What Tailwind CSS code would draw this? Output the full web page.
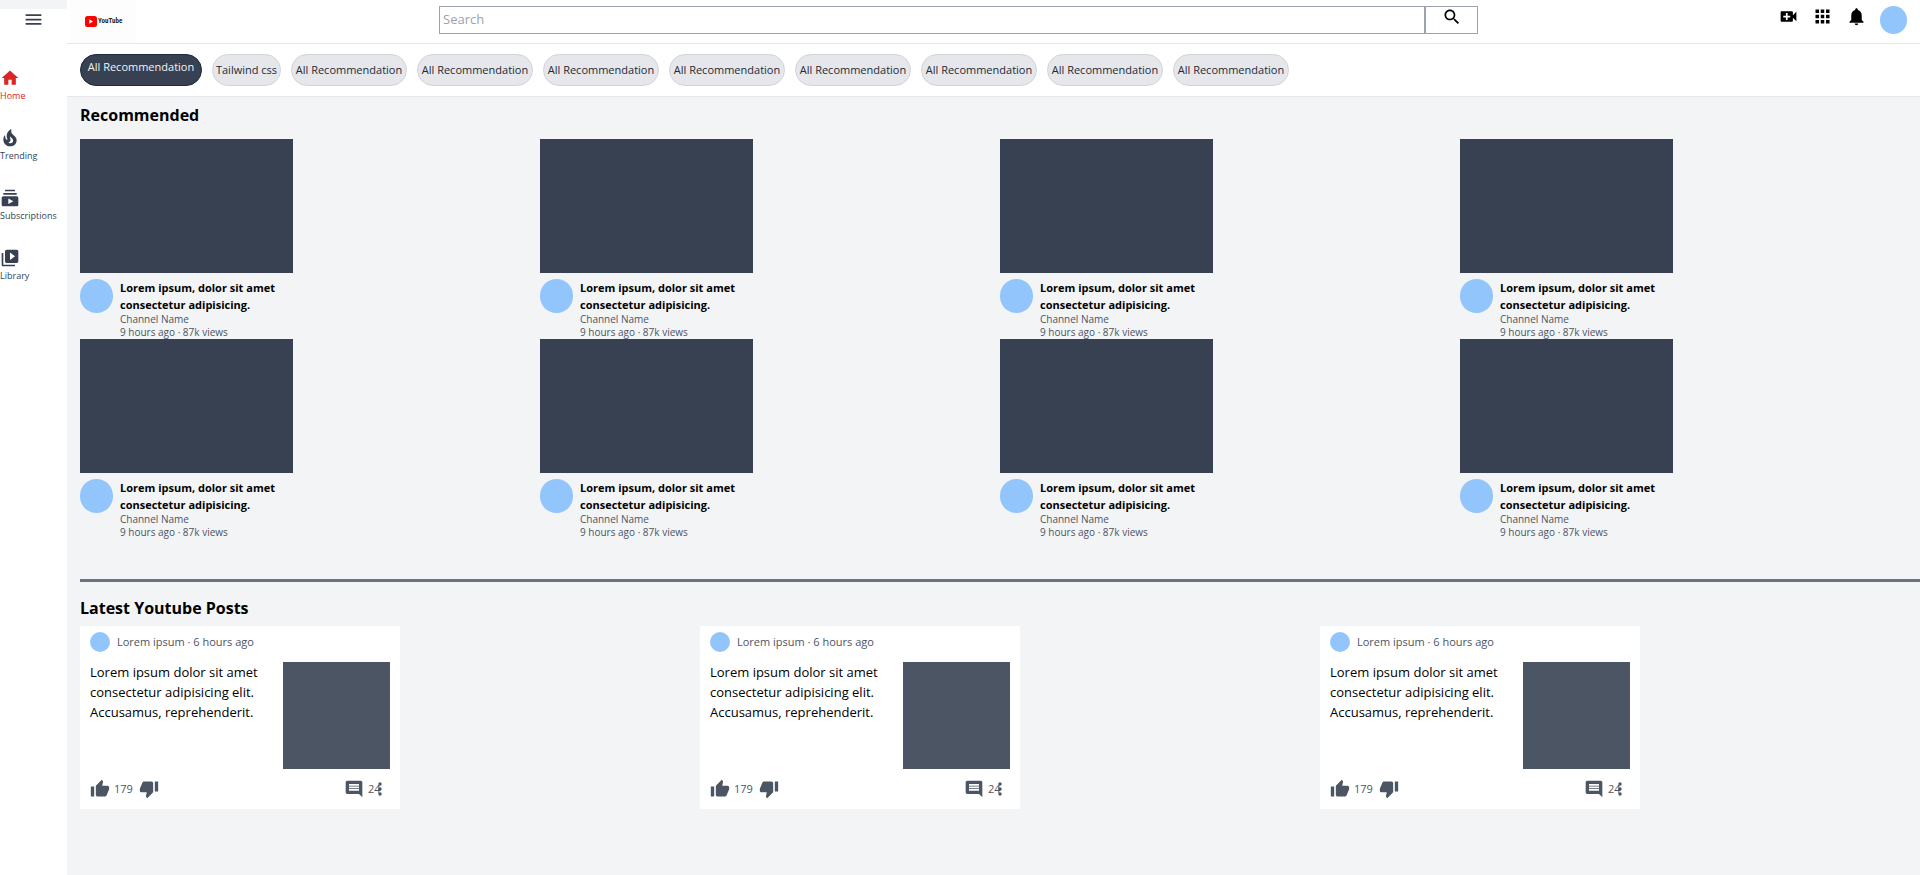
<!DOCTYPE html>
<html lang="en">
<head>
<meta charset="utf-8">
<meta name="viewport" content="width=device-width, initial-scale=1">
<title>YouTube</title>
<script src="https://cdn.jsdelivr.net/npm/@tailwindcss/browser@4"></script>
</head>
<body class="flex min-h-screen bg-[#f3f4f6] font-['Open_Sans','Noto_Sans',sans-serif] text-black">

<svg class="hidden" aria-hidden="true">
  <symbol id="menu" viewBox="0 0 24 24"><path d="M3 18h18v-2H3v2zm0-5h18v-2H3v2zm0-7v2h18V6H3z"/></symbol>
  <symbol id="home" viewBox="0 0 24 24"><path d="M10 20v-6h4v6h5v-8h3L12 3 2 12h3v8z"/></symbol>
  <symbol id="fire" viewBox="0 0 24 24"><path d="M19.48 12.35c-1.57-4.08-7.16-4.3-5.81-10.23.1-.44-.37-.78-.75-.55C9.29 3.71 6.68 8 8.87 13.62c.18.46-.36.89-.75.59-1.81-1.37-2-3.34-1.84-4.75.06-.52-.62-.77-.91-.34C4.69 10.16 4 11.84 4 14.37c.38 5.6 5.11 7.32 6.81 7.54 2.43.31 5.06-.14 6.95-1.87 2.08-1.93 2.84-5.01 1.72-7.69zm-9.28 5.03c1.44-.35 2.18-1.39 2.38-2.31.33-1.43-.96-2.83-.09-5.09.33 1.87 3.27 3.04 3.27 5.08.08 2.53-2.66 4.7-5.56 2.32z"/></symbol>
  <symbol id="subs" viewBox="0 0 24 24"><path d="M20 8H4V6h16v2zm-2-6H6v2h12V2zm4 10v8c0 1.1-.9 2-2 2H4c-1.1 0-2-.9-2-2v-8c0-1.1.9-2 2-2h16c1.1 0 2 .9 2 2zm-6 4l-6-3.27v6.53L16 16z"/></symbol>
  <symbol id="library" viewBox="0 0 24 24"><path d="M4 6H2v14c0 1.1.9 2 2 2h14v-2H4V6zm16-4H8c-1.1 0-2 .9-2 2v12c0 1.1.9 2 2 2h12c1.1 0 2-.9 2-2V4c0-1.1-.9-2-2-2zm-8 12.5v-9l6 4.5-6 4.5z"/></symbol>
  <symbol id="search" viewBox="0 0 24 24"><path d="M15.5 14h-.79l-.28-.27C15.41 12.59 16 11.11 16 9.5 16 5.91 13.09 3 9.5 3S3 5.91 3 9.5 5.91 16 9.5 16c1.61 0 3.09-.59 4.23-1.57l.27.28v.79l5 4.99L20.49 19l-4.99-5zm-6 0C7.01 14 5 11.99 5 9.5S7.01 5 9.5 5 14 7.01 14 9.5 11.99 14 9.5 14z"/></symbol>
  <symbol id="create" viewBox="0 0 24 24"><path d="M17 10.5V7c0-.55-.45-1-1-1H4c-.55 0-1 .45-1 1v10c0 .55.45 1 1 1h12c.55 0 1-.45 1-1v-3.5l4 4v-11l-4 4zM14 13h-3v3H9v-3H6v-2h3V8h2v3h3v2z"/></symbol>
  <symbol id="apps" viewBox="0 0 24 24"><path d="M4 8h4V4H4v4zm6 12h4v-4h-4v4zm-6 0h4v-4H4v4zm0-6h4v-4H4v4zm6 0h4v-4h-4v4zm6-10v4h4V4h-4zm-6 4h4V4h-4v4zm6 6h4v-4h-4v4zm0 6h4v-4h-4v4z"/></symbol>
  <symbol id="bell" viewBox="0 0 24 24"><path d="M12 22c1.1 0 2-.9 2-2h-4c0 1.1.89 2 2 2zm6-6v-5c0-3.07-1.64-5.64-4.5-6.32V4c0-.83-.67-1.5-1.5-1.5s-1.5.67-1.5 1.5v.68C7.63 5.36 6 7.92 6 11v5l-2 2v1h16v-1l-2-2z"/></symbol>
  <symbol id="up" viewBox="0 0 24 24"><path d="M1 21h4V9H1v12zm22-11c0-1.1-.9-2-2-2h-6.31l.95-4.57.03-.32c0-.41-.17-.79-.44-1.06L14.17 1 7.59 7.59C7.22 7.95 7 8.45 7 9v10c0 1.1.9 2 2 2h9c.83 0 1.54-.5 1.84-1.22l3.02-7.05c.09-.23.14-.47.14-.73v-2z"/></symbol>
  <symbol id="down" viewBox="0 0 24 24"><path d="M15 3H6c-.83 0-1.54.5-1.84 1.22l-3.02 7.05c-.09.23-.14.47-.14.73v2c0 1.1.9 2 2 2h6.31l-.95 4.57-.03.32c0 .41.17.79.44 1.06L9.83 23l6.59-6.59c.36-.36.58-.86.58-1.41V5c0-1.1-.9-2-2-2zm4 0v12h4V3h-4z"/></symbol>
  <symbol id="comment" viewBox="0 0 24 24"><path d="M21.99 4c0-1.1-.89-2-1.99-2H4c-1.1 0-2 .9-2 2v12c0 1.1.9 2 2 2h14l4 4-.01-18zM18 14H6v-2h12v2zm0-3H6V9h12v2zm0-3H6V6h12v2z"/></symbol>
  <symbol id="more" viewBox="0 0 24 24"><path d="M12 8c1.1 0 2-.9 2-2s-.9-2-2-2-2 .9-2 2 .9 2 2 2zm0 2c-1.1 0-2 .9-2 2s.9 2 2 2 2-.9 2-2-.9-2-2-2zm0 6c-1.1 0-2 .9-2 2s.9 2 2 2 2-.9 2-2-.9-2-2-2z"/></symbol>
</svg>

<aside class="mt-[9px] flex w-[67px] shrink-0 flex-col bg-white text-[#374151]">
  <button type="button" aria-label="Menu" class="flex h-5 justify-center"><svg class="size-[21px] fill-current"><use href="#menu"/></svg></button>
  <nav class="mt-[39px] flex flex-col gap-6 text-[9px] leading-[15px]">
    <a href="#" class="flex h-9 flex-col text-[#dc2626]"><svg class="size-5 fill-current"><use href="#home"/></svg>Home</a>
    <a href="#" class="flex h-9 flex-col"><svg class="size-5 fill-current"><use href="#fire"/></svg>Trending</a>
    <a href="#" class="flex h-9 flex-col"><svg class="size-5 fill-current"><use href="#subs"/></svg>Subscriptions</a>
    <a href="#" class="flex h-9 flex-col"><svg class="size-5 fill-current"><use href="#library"/></svg>Library</a>
  </nav>
</aside>

<div class="min-w-0 flex-1">
  <header class="flex h-11 items-start border-b border-[#e5e7eb] bg-white">
    <a href="#" aria-label="YouTube home" class="ml-[3px] flex h-[43px] w-[66px] items-center gap-px bg-[#fdfdfd] pl-[15px]">
      <svg class="h-[11px] w-3 shrink-0" viewBox="0 0 12 11"><rect width="12" height="11" rx="2.5" fill="#f00"/><path d="M4.3 3.2v4.6L8 5.5z" fill="#fff"/></svg>
      <span class="font-['Roboto_Condensed','Roboto',sans-serif] text-[7px] font-bold text-[#282828]">YouTube</span>
    </a>
    <form class="mt-1.5 ml-[303px] flex h-7 flex-1" onsubmit="return false">
      <input type="search" aria-label="Search" placeholder="Search" class="min-w-0 flex-1 border border-[#9ca3af] pl-[3px] text-[13px] outline-none placeholder:text-[#9ca3af]">
      <button type="submit" aria-label="Search" class="flex w-[53px] justify-center border border-[#9ca3af]"><svg class="size-5"><use href="#search"/></svg></button>
    </form>
    <div class="mt-1.5 ml-[300px] mr-[13px] flex gap-[13px]">
      <button type="button" aria-label="Create" class="h-5"><svg class="size-[21px]"><use href="#create"/></svg></button>
      <button type="button" aria-label="Apps" class="h-5"><svg class="size-[21px]"><use href="#apps"/></svg></button>
      <button type="button" aria-label="Notifications" class="h-5"><svg class="size-[21px]"><use href="#bell"/></svg></button>
      <button type="button" aria-label="Account" class="h-7 w-[27px] rounded-full bg-[#93c5fd]"></button>
    </div>
  </header>

  <div id="chips" class="flex h-[53px] items-center gap-2.5 border-b border-[#e5e7eb] bg-white pl-[13px] text-[11px] text-[#1f2937]">
    <button type="button" class="h-8 w-[122px] rounded-full border border-[#1f2937] bg-[#374151] pb-1.5 whitespace-nowrap text-[#f3f4f6]">All Recommendation</button>
    <button type="button" class="h-8 w-[69px] rounded-full border border-[#d1d5db] bg-[#e5e7eb] whitespace-nowrap">Tailwind css</button>
  </div>

  <main class="pl-[13px]">
    <h2 class="pt-1.5 text-base leading-6 font-bold">Recommended</h2>
    <section id="videos" aria-label="Recommended" class="mt-3 grid grid-cols-4"></section>
    <hr class="mt-10 border-t-3 border-[#6b7280]">
    <h2 class="mt-3.5 text-base leading-6 font-bold">Latest Youtube Posts</h2>
    <section id="posts" aria-label="Latest Youtube Posts" class="mt-1.5 grid grid-cols-3 gap-5"></section>
  </main>
</div>

<template id="chip">
  <button type="button" class="h-8 w-[116px] rounded-full border border-[#d1d5db] bg-[#e5e7eb] whitespace-nowrap">All Recommendation</button>
</template>

<template id="video">
  <article class="h-[200px] w-[213px]">
    <div class="h-[134px] bg-[#374151]"></div>
    <div class="mt-1.5 flex gap-[7px]">
      <div class="h-[34px] w-[33px] shrink-0 rounded-full bg-[#93c5fd]"></div>
      <div class="text-[10px] leading-[13px] text-[#4b5563]">
        <h3 class="text-[11px] leading-[17px] font-bold whitespace-nowrap text-black">Lorem ipsum, dolor sit amet<br>consectetur adipisicing.</h3>
        <p>Channel Name</p>
        <p>9 hours ago · 87k views</p>
      </div>
    </div>
  </article>
</template>

<template id="post">
  <article class="h-[183px] w-80 bg-white px-2.5 pt-1.5 text-[#4b5563]">
    <div class="flex h-5 items-center gap-[7px] text-[11px]"><span class="size-5 rounded-full bg-[#93c5fd]"></span>Lorem ipsum · 6 hours ago</div>
    <div class="mt-2.5 flex justify-between">
      <p class="text-[13px] leading-5 whitespace-nowrap text-black">Lorem ipsum dolor sit amet<br>consectetur adipisicing elit.<br>Accusamus, reprehenderit.</p>
      <div class="size-[107px] bg-[#4b5563]"></div>
    </div>
    <div class="mt-2.5 flex h-5 items-center text-[11px]">
      <button type="button" aria-label="Like" class="flex items-center gap-1"><svg class="size-5 fill-current"><use href="#up"/></svg>179</button>
      <button type="button" aria-label="Dislike" class="ml-1.5"><svg class="size-5 fill-current"><use href="#down"/></svg></button>
      <button type="button" aria-label="Comments" class="ml-auto flex items-center gap-1"><svg class="size-5 fill-current"><use href="#comment"/></svg><span class="w-3">24</span></button>
      <button type="button" aria-label="More" class="-ml-2.5"><svg class="size-5 fill-current"><use href="#more"/></svg></button>
    </div>
  </article>
</template>

<script>
  const repeat = (template, target, count) => {
    for (let i = 0; i < count; i++) {
      document.getElementById(target).append(document.getElementById(template).content.cloneNode(true));
    }
  };
  repeat('chip', 'chips', 8);
  repeat('video', 'videos', 8);
  repeat('post', 'posts', 3);
</script>
</body>
</html>
